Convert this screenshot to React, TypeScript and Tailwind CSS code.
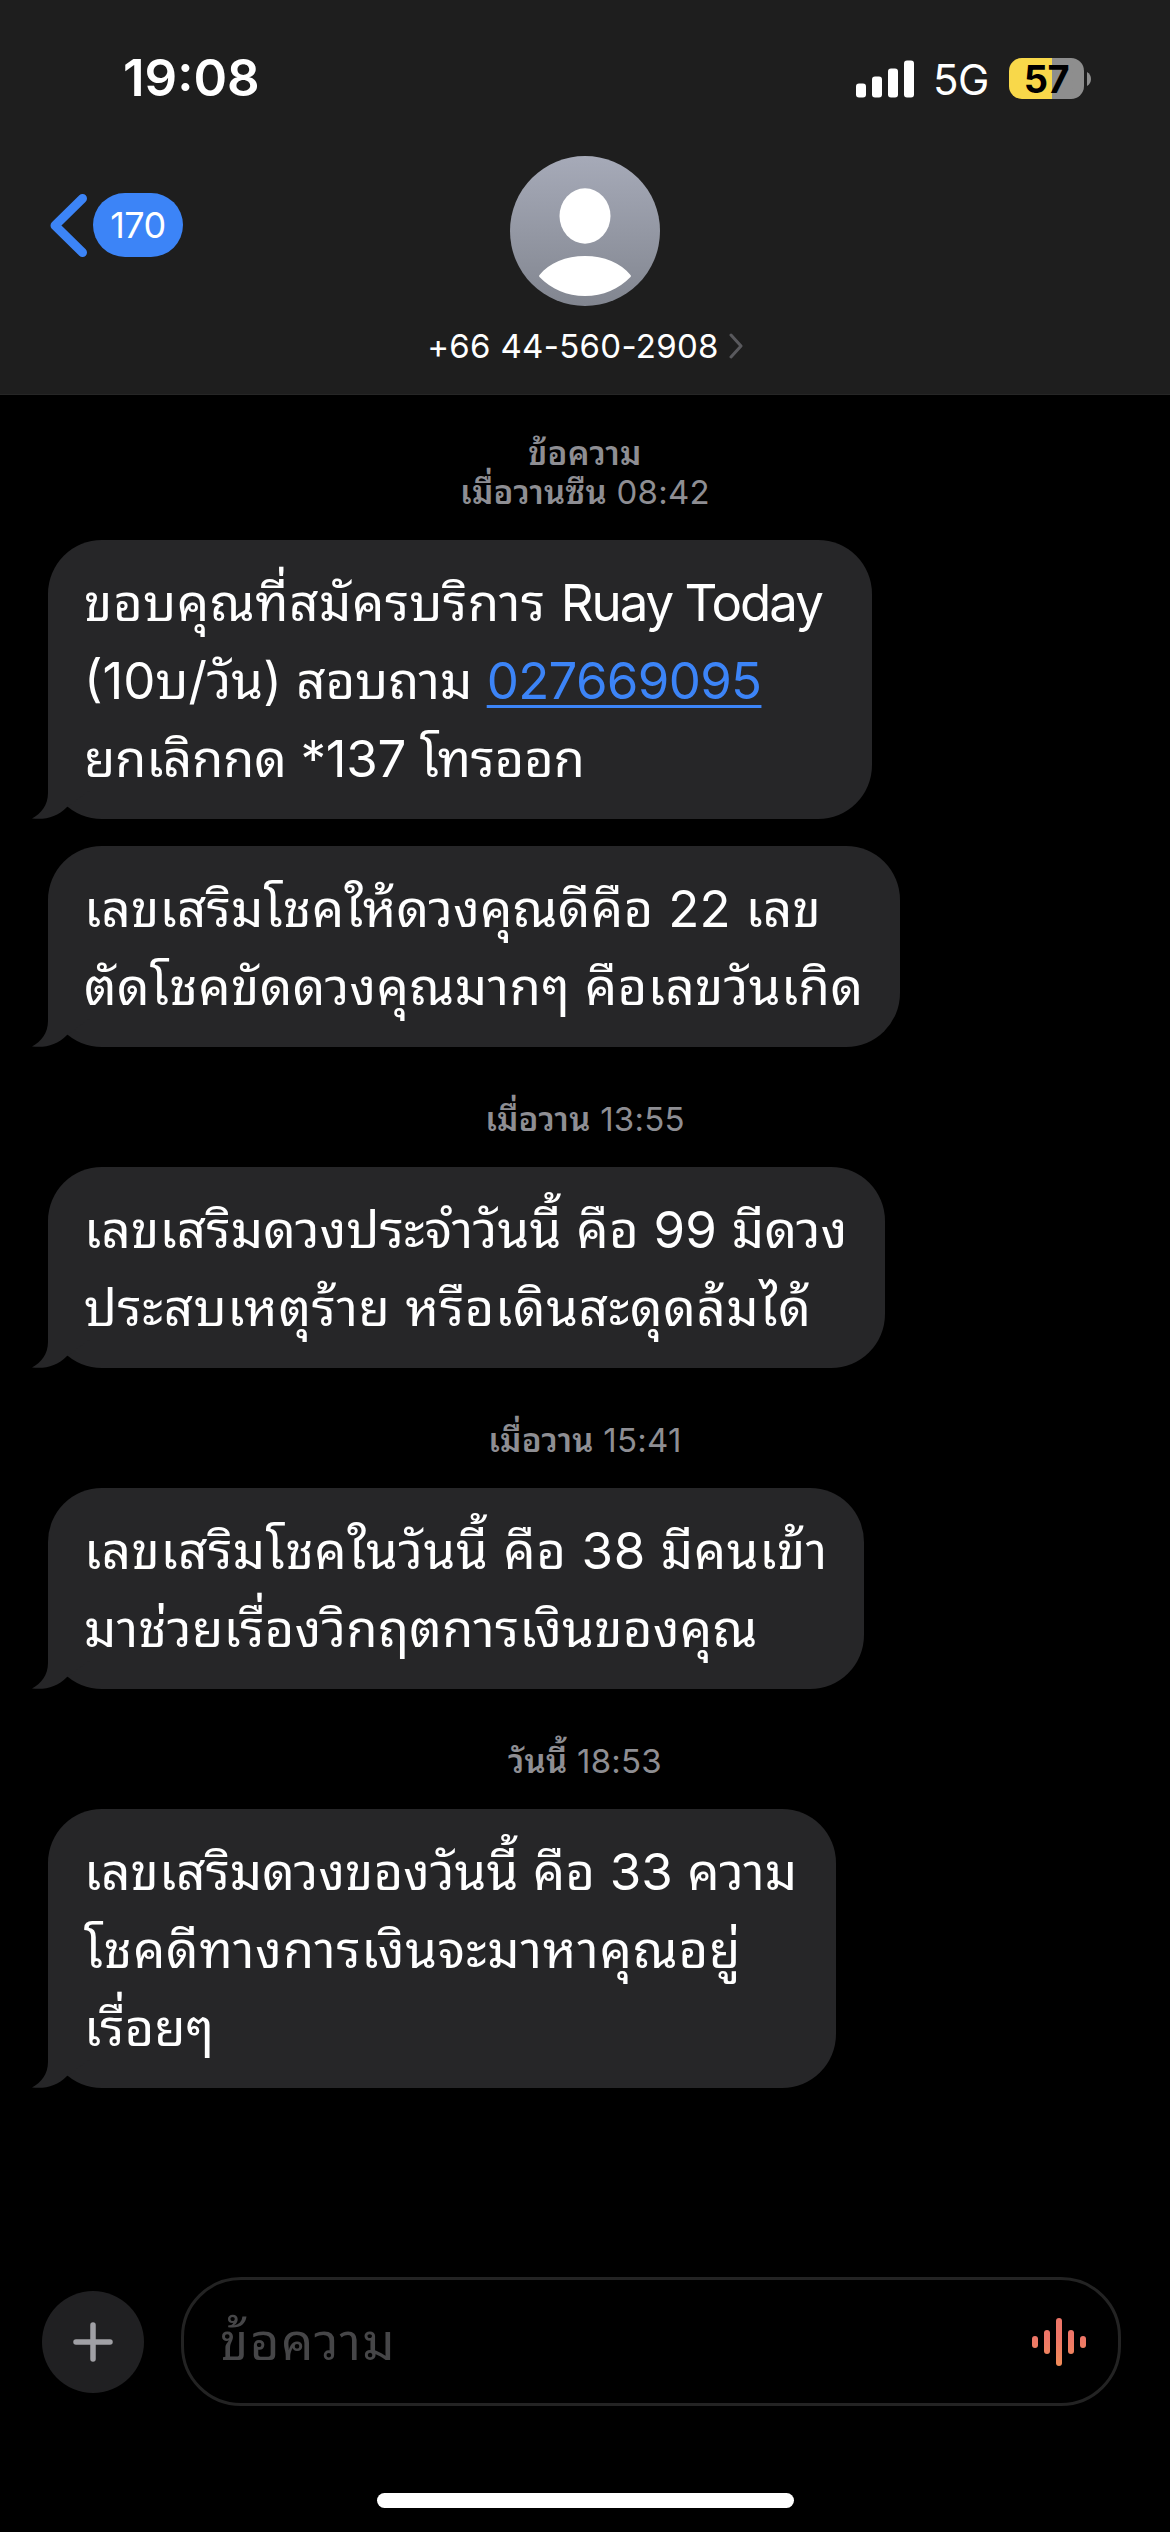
import { clsx } from "clsx";

type Line = { text: string; latin?: string; link?: string; className?: string };

type Item =
  | { kind: "time"; day: string; time: string; title?: string; className: string }
  | { kind: "message"; lines: Line[]; className: string };

const items: Item[] = [
  { kind: "time", title: "ข้อความ", day: "เมื่อวานซืน", time: "08:42", className: "h-[145px] pt-[39px]" },
  {
    kind: "message",
    className: "w-[824px]",
    lines: [
      { text: "ขอบคุณที่สมัครบริการ ", latin: "Ruay Today", className: "tracking-[0.570px]" },
      { text: "(10บ/วัน) สอบถาม ", link: "027669095" },
      { text: "ยกเลิกกด *137 โทรออก", className: "tracking-[-0.3px]" },
    ],
  },
  {
    kind: "message",
    className: "mt-[27px] w-[852px]",
    lines: [
      { text: "เลขเสริมโชคให้ดวงคุณดีคือ 22 เลข", className: "tracking-[0.300px]" },
      { text: "ตัดโชคขัดดวงคุณมากๆ คือเลขวันเกิด", className: "tracking-[0.430px]" },
    ],
  },
  { kind: "time", day: "เมื่อวาน", time: "13:55", className: "h-[120px] pt-[53px]" },
  {
    kind: "message",
    className: "w-[837px]",
    lines: [
      { text: "เลขเสริมดวงประจำวันนี้ คือ 99 มีดวง", className: "tracking-[0.240px]" },
      { text: "ประสบเหตุร้าย หรือเดินสะดุดล้มได้", className: "tracking-[0.670px]" },
    ],
  },
  { kind: "time", day: "เมื่อวาน", time: "15:41", className: "h-[120px] pt-[53px]" },
  {
    kind: "message",
    className: "w-[816px]",
    lines: [
      { text: "เลขเสริมโชคในวันนี้ คือ 38 มีคนเข้า", className: "tracking-[0.600px]" },
      { text: "มาช่วยเรื่องวิกฤตการเงินของคุณ", className: "tracking-[0.300px]" },
    ],
  },
  { kind: "time", day: "วันนี้", time: "18:53", className: "h-[120px] pt-[53px]" },
  {
    kind: "message",
    className: "w-[788px]",
    lines: [
      { text: "เลขเสริมดวงของวันนี้ คือ 33 ความ", className: "tracking-[0.100px]" },
      { text: "โชคดีทางการเงินจะมาหาคุณอยู่", className: "tracking-[0.800px]" },
      { text: "เรื่อยๆ" },
    ],
  },
];

function StatusBar() {
  return (
    <div className="flex h-[156px] items-start justify-between pt-[47px] pr-[79px] pl-[123px]">
      <span className="text-[51px] leading-[62px] font-semibold">19:08</span>
      <div className="flex items-center pt-[10px]">
        <svg width="58" height="38" viewBox="0 0 58 38" fill="#fff">
          <rect x="0" y="23.5" width="10" height="14" rx="3" />
          <rect x="16" y="16.5" width="10" height="21" rx="3" />
          <rect x="32" y="8.5" width="10" height="29" rx="3" />
          <rect x="48" y="0.5" width="10" height="37" rx="3" />
        </svg>
        <span className="mt-[2px] ml-[19px] w-[54px] text-[42px] leading-[41px] tracking-[-0.5px] whitespace-nowrap">5G</span>
        {/* バッテリー */}
        <div className="ml-[22px] flex h-[41px] w-[75px] items-center justify-center rounded-[13px] bg-linear-to-r from-[#f8d84a] from-57% to-[#8e8e8e] to-57% text-[38px] leading-none font-bold tracking-[-0.5px] text-black">
          57
        </div>
        <svg className="ml-[3px]" width="4" height="14" viewBox="0 0 4 14" fill="#8e8e8e">
          <path d="M0 0C5.300 2.500 5.300 11.500 0 14Z" />
        </svg>
      </div>
    </div>
  );
}

function Header() {
  return (
    <header className="h-[395px] border-b border-[#262626] bg-[#1e1e1e]">
      <StatusBar />
      <div className="grid grid-cols-3">
        <div className="flex items-start pt-[37px] pl-[50px]">
          <svg className="mt-px" width="38" height="64" viewBox="0 0 38 64" fill="none">
            <path d="M32.500 4.500L5 31.500L32.500 58.500" stroke="#3c84f7" strokeWidth="9" strokeLinecap="round" strokeLinejoin="round" />
          </svg>
          <span className="ml-[5px] flex h-16 w-[90px] items-center justify-center rounded-[32px] bg-[#3c84f7] text-[36px] tracking-[-0.5px]">
            170
          </span>
        </div>
        <div className="flex flex-col items-center">
          <svg width="150" height="150" viewBox="0 0 150 150">
            <defs>
              <linearGradient id="avatar" x1="0" y1="0" x2="0" y2="1">
                <stop offset="0" stopColor="#a6aab8" />
                <stop offset="1" stopColor="#828690" />
              </linearGradient>
            </defs>
            <circle cx="75" cy="75" r="75" fill="url(#avatar)" />
            <ellipse cx="75" cy="60" rx="25.500" ry="27.700" fill="#fff" />
            <path d="M29.500 119C39 107 56 100 75 100C94 100 111 107 120.500 119Q121.500 120 120.500 121C109 133 93 140 75 140C57 140 41 133 29.500 121Q28.500 120 29.500 119Z" fill="#fff" />
          </svg>
          <div className="mt-[19px] flex items-center gap-[10px] whitespace-nowrap">
            <span className="text-[33px] leading-[42px] tracking-[0.300px]">+66 44-560-2908</span>
            <svg width="14" height="26" viewBox="0 0 14 26" fill="none">
              <path d="M2 2L12 13L2 24" stroke="#59595d" strokeWidth="3" strokeLinecap="round" strokeLinejoin="round" />
            </svg>
          </div>
        </div>
      </div>
    </header>
  );
}

function TimeLabel({ item }: { item: Extract<Item, { kind: "time" }> }) {
  return (
    <div className={clsx("w-full text-center text-[33px] leading-[39px] tracking-[0.250px] text-[#8e8e93]", item.className)}>
      {item.title && <div className="font-semibold">{item.title}</div>}
      <span className="font-semibold">{item.day}</span> {item.time}
    </div>
  );
}

function Message({ item }: { item: Extract<Item, { kind: "message" }> }) {
  return (
    <div className={clsx("relative ml-12 rounded-[54px] bg-[#262628] pt-6 pb-[21px] pl-9", item.className)}>
      {/* 吹き出しのしっぽ */}
      <svg className="absolute bottom-0 -left-4" width="60" height="60" viewBox="0 0 60 60">
        <path d="M16 0V34C16 46 9 55 0 59.500C14 61 25 58 35 48L60 30V0Z" fill="#262628" />
      </svg>
      <div className="relative text-[51px] leading-[78px] whitespace-pre">
        {item.lines.map((line) => (
          <p key={line.text} className={line.className}>
            {line.text}
            {line.latin && <span className="tracking-[-2px]">{line.latin}</span>}
            {line.link && (
              <a className="tracking-[-0.7px] text-[#3c84f7] underline decoration-[3px] underline-offset-[6px]">{line.link}</a>
            )}
          </p>
        ))}
      </div>
    </div>
  );
}

function Composer() {
  return (
    <footer className="flex h-[255px] flex-col items-center">
      <div className="flex w-full items-center pr-[49px] pl-[42px]">
        <button className="flex h-[102px] w-[102px] items-center justify-center rounded-full bg-[#202022]">
          <svg width="40" height="40" viewBox="0 0 40 40" stroke="#a0a0a5" strokeWidth="5.500" strokeLinecap="round">
            <path d="M20 3V37M3 20H37" />
          </svg>
        </button>
        <div className="ml-[37px] flex h-[129px] flex-1 items-center justify-between rounded-[60px] border-[3px] border-[#232323] pr-8 pl-9">
          <span className="text-[51px] leading-[62px] tracking-[1.400px] text-[#464648]">ข้อความ</span>
          <svg width="54" height="48" viewBox="0 0 54 48">
            <defs>
              <linearGradient id="wave" gradientUnits="userSpaceOnUse" x1="0" y1="0" x2="0" y2="48">
                <stop offset="0.400" stopColor="#ee7668" />
                <stop offset="1" stopColor="#f08c58" />
              </linearGradient>
            </defs>
            <g fill="url(#wave)">
              <rect x="0" y="18" width="6" height="12" rx="3" />
              <rect x="12" y="12" width="6" height="24" rx="3" />
              <rect x="24" y="0" width="6" height="48" rx="3" />
              <rect x="36" y="12" width="6" height="24" rx="3" />
              <rect x="48" y="18" width="6" height="12" rx="3" />
            </g>
          </svg>
        </div>
      </div>
      <div className="mt-[87px] h-[15px] w-[417px] rounded-full bg-white" />
    </footer>
  );
}

export default function App() {
  return (
    <div className="flex h-[2532px] w-[1170px] flex-col overflow-hidden bg-black font-[Inter,'Noto_Sans_Thai_Looped','Loma','Noto_Sans_Thai','Noto_Sans',sans-serif] text-white">
      <Header />
      <main className="flex-1">
        {items.map((item, i) =>
          item.kind === "time" ? <TimeLabel key={i} item={item} /> : <Message key={i} item={item} />
        )}
      </main>
      <Composer />
    </div>
  );
}
